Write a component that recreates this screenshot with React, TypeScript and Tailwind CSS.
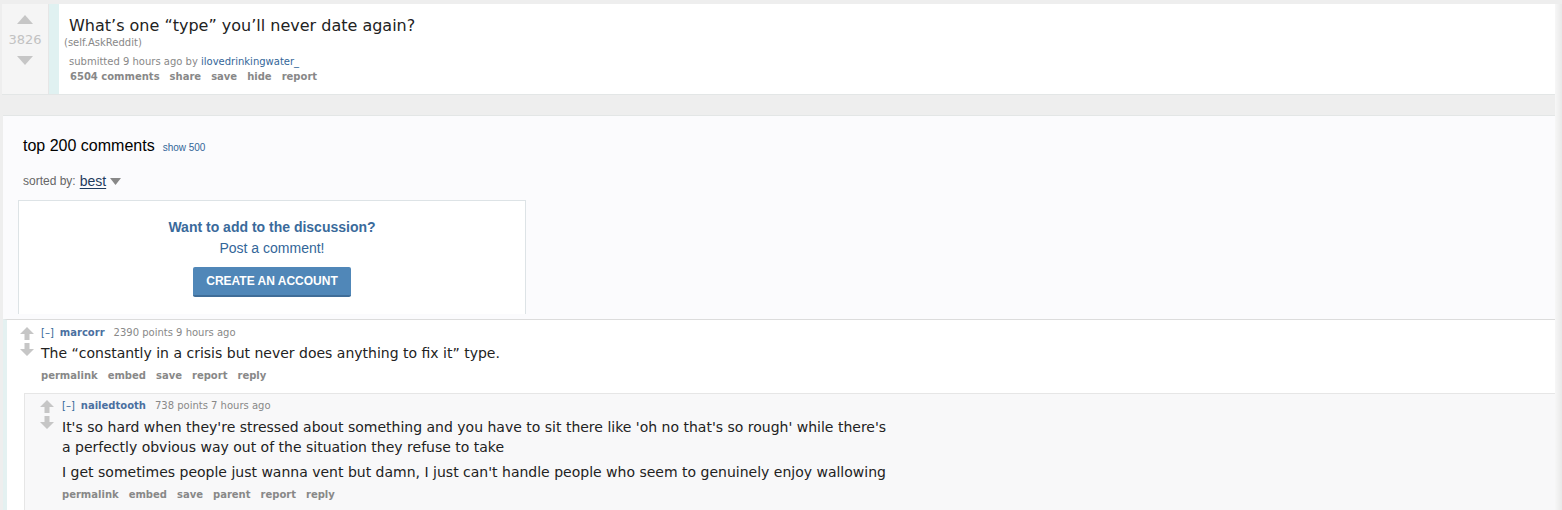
import React from "react";

const verdana = { fontFamily: '"DejaVu Sans", Verdana, sans-serif' };
const arial = { fontFamily: '"Liberation Sans", Arial, sans-serif' };

// solid triangle arrows for the post score
const Triangle = ({ down }: { down?: boolean }) => (
  <svg width="16" height="9" viewBox="0 0 16 9" className="block">
    <polygon
      points={down ? "0,0 16,0 8,9" : "8,0 16,9 0,9"}
      fill="#c6c6c6"
    />
  </svg>
);

// comment arrows with a stem
const StemArrow = ({ down }: { down?: boolean }) => (
  <svg width="14" height="13" viewBox="0 0 14 13" className="block">
    <path
      d={down ? "M4.5 0H9.5V6H14L7 13L0 6H4.5Z" : "M7 0L14 7H9.5V13H4.5V7H0Z"}
      fill="#c6c6c6"
    />
  </svg>
);

const FlatList = ({ items }: { items: string[] }) => (
  <div className="flex gap-[10px] text-[10px] font-bold text-[#888]" style={verdana}>
    {items.map((item) => (
      <span key={item}>{item}</span>
    ))}
  </div>
);

const Tagline = ({ author, points, age }: { author: string; points: string; age: string }) => (
  <div className="flex items-center gap-[6px] text-[10px] leading-[14px]" style={verdana}>
    <span className="text-[#369]">[–]</span>
    <span className="font-bold text-[#4a6fa0]">{author}</span>
    <span className="ml-[3px] text-[#888]">
      {points} points {age}
    </span>
  </div>
);

const CommentVotes = () => (
  <div className="flex flex-col gap-[3px] pt-[1px]">
    <StemArrow />
    <StemArrow down />
  </div>
);

export default function App() {
  return (
    <div className="relative h-[510px] w-full overflow-hidden bg-[#eeeeee]">
      {/* post */}
      <div className="ml-[2px] mr-[7px] mt-[4px] flex h-[91px] border-b border-[#e3e6e6] bg-white">
        <div className="flex w-[47px] flex-col items-center border-r border-[#e6e6e6] bg-[#f5f5f5] pt-[11px]">
          <Triangle />
          <div className="mt-[9px] text-[13px] leading-[14px] text-[#c2c2c2]" style={verdana}>
            3826
          </div>
          <div className="mt-[9px]">
            <Triangle down />
          </div>
        </div>
        <div className="w-[10px] bg-[#e0f1f1]" />
        <div className="flex flex-col pt-[12px]">
          <div className="pl-[10px] text-[16px] leading-[20px] text-[#222]" style={verdana}>
            What’s one “type” you’ll never date again?
          </div>
          <div className="pl-[5px] text-[10px] leading-[14px] text-[#888]" style={verdana}>
            (self.AskReddit)
          </div>
          <div className="mt-[5px] pl-[10px] text-[10px] leading-[14px] text-[#888]" style={verdana}>
            submitted 9 hours ago by <span className="text-[#369]">ilovedrinkingwater_</span>
          </div>
          <div className="pl-[11px]">
            <FlatList items={["6504 comments", "share", "save", "hide", "report"]} />
          </div>
        </div>
      </div>

      {/* comment area */}
      <div className="ml-[3px] mr-[7px] mt-[20px] border-t border-[#e3e6e6] bg-[#fbfbfd]">
        <div className="px-[20px] pt-[20px]" style={arial}>
          <div className="flex items-baseline gap-[8px]">
            <span className="text-[16px] leading-[20px] text-black">top 200 comments</span>
            <span className="text-[10px] text-[#369]">show 500</span>
          </div>
          <div className="mt-[16px] flex items-center gap-[4px] text-[12px] text-[#666]">
            <span>sorted by:</span>
            <span className="text-[14px] leading-[16px] text-[#1f3b5e] underline underline-offset-2">best</span>
            <svg width="11" height="7" viewBox="0 0 11 7" className="mt-[1px]">
              <polygon points="0,0 11,0 5.5,7" fill="#888" />
            </svg>
          </div>
        </div>
        <div className="ml-[15px] mt-[10px] flex h-[114px] w-[508px] flex-col items-center border-x border-t border-[#dde3e6] bg-white pt-[17px]" style={arial}>
          <div className="text-[14px] font-bold leading-[18px] text-[#3a6a9b]">
            Want to add to the discussion?
          </div>
          <div className="mt-[3px] text-[14px] leading-[18px] text-[#336699]">Post a comment!</div>
          <div className="mt-[10px] flex h-[30px] w-[158px] items-center justify-center rounded-[2px] border-b-2 border-[#3f6d98] bg-[#5087b8] text-[12px] font-bold text-white">
            CREATE AN ACCOUNT
          </div>
        </div>
        <div className="h-[5px]" />

        {/* comment 1 */}
        <div className="border-l-[4px] border-t border-[#e4f1f1] border-t-[#dcdcdc] bg-white">
          <div className="flex gap-[7px] pl-[13px] pt-[6px]">
            <CommentVotes />
            <div className="flex flex-col">
              <Tagline author="marcorr" points="2390" age="9 hours ago" />
              <div className="mt-[4px] text-[14px] leading-[18px] text-[#222]" style={verdana}>
                The “constantly in a crisis but never does anything to fix it” type.
              </div>
              <div className="mt-[6px]">
                <FlatList items={["permalink", "embed", "save", "report", "reply"]} />
              </div>
            </div>
          </div>

          {/* child comment */}
          <div className="ml-[17px] mt-[10px] h-[120px] border-l border-t border-[#e6e6e6] bg-[#f8f8f9]">
            <div className="flex gap-[8px] pl-[15px] pt-[5px]">
              <CommentVotes />
              <div className="flex flex-col">
                <Tagline author="nailedtooth" points="738" age="7 hours ago" />
                <div className="mt-[4px] text-[14px] leading-[20px] text-[#222]" style={verdana}>
                  It's so hard when they're stressed about something and you have to sit there like 'oh no that's so rough' while there's
                  <br />
                  a perfectly obvious way out of the situation they refuse to take
                </div>
                <div className="mt-[5px] text-[14px] leading-[20px] text-[#222]" style={verdana}>
                  I get sometimes people just wanna vent but damn, I just can't handle people who seem to genuinely enjoy wallowing
                </div>
                <div className="mt-[5px]">
                  <FlatList items={["permalink", "embed", "save", "parent", "report", "reply"]} />
                </div>
              </div>
            </div>
          </div>
        </div>
      </div>

      {/* sidebar shadow */}
      <div className="pointer-events-none absolute bottom-0 right-0 top-[4px] w-[7px] bg-gradient-to-r from-[#f7f7f7] to-[#e9e9e9]" />
    </div>
  );
}
